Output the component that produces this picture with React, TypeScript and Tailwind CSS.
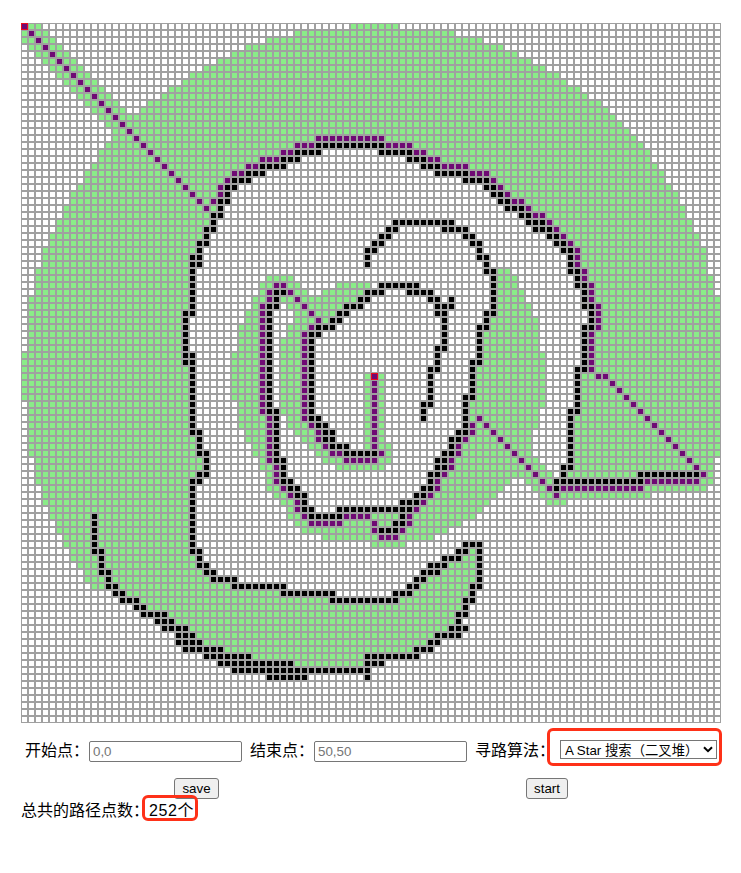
import React from "react";

type CellKind = "empty" | "visited" | "wall" | "path";

const SIZE = 100;
const START = { row: 0, col: 0 };
const END = { row: 50, col: 50 };

// Each line is "row: spans", where a span is either "col" or "from-to".
const VISITED = `
0: 1-2 47-53
1: 0-3 39-61
2: 0-4 35-65
3: 1-5 32-68
4: 2-6 30-70
5: 3-7 28-72
6: 4-8 26-74
7: 5-9 24-76
8: 6-10 23-77
9: 7-11 21-79
10: 8-12 20-80
11: 9-13 18-82
12: 10-14 17-83
13: 11-84
14: 12-85
15: 13-86
16: 13-87
17: 12-88
18: 11-42 51-89
19: 11-39 55-89
20: 10-37 57-90
21: 9-34 59-91
22: 9-32 63-91
23: 8-30 66-92
24: 7-29 67-93
25: 7-29 68-93
26: 6-28 69-94
27: 6-28 71-94
28: 5-27 72-95
29: 5-27 73-95
30: 4-26 75-96
31: 4-26 76-96
32: 3-25 77-97
33: 3-25 78-97
34: 3-25 78-97
35: 2-24 67-69 78-97
36: 2-24 35-38 67-70 79-98
37: 2-24 34-39 45-49 67-70 79-98
38: 2-24 34-40 43-48 67-71 80-98
39: 1-24 33-48 67-71 80-99
40: 1-24 33-35 38-46 67-72 80-99
41: 1-23 32-35 39-45 67-72 81-99
42: 1-23 32-35 39-44 66-73 81-99
43: 1-23 31-35 38-42 66-73 80-99
44: 1-23 31-35 38-41 65-73 80-99
45: 1-23 31-35 37-41 65-73 80-99
46: 1-23 31-35 37-41 65-73 80-99
47: 0-23 30-35 37-41 65-74 80-99
48: 0-23 30-35 37-41 65-74 80-99
49: 0-24 30-35 37-41 64-74 80-99
50: 0-24 30-35 37-41 49-51 64-74 79-99
51: 0-24 30-35 37-41 49-51 64-74 79-99
52: 0-24 30-35 37-41 49-51 64-74 79-99
53: 0-24 30-35 37-41 49-51 64-74 79-99
54: 1-24 31-35 37-41 49-51 63-74 79-99
55: 1-24 31-41 49-51 63-73 79-99
56: 1-24 31-36 38-41 49-51 63-73 78-99
57: 1-24 31-36 38-42 49-51 63-73 78-99
58: 1-24 32-36 39-43 49-51 63-72 78-99
59: 1-25 32-36 40-43 49-51 62-72 78-99
60: 1-25 33-36 41-44 49-52 61-72 78-99
61: 1-25 33-36 42-52 61-72 78-99
62: 2-26 34-36 43-52 60-73 78-98
63: 2-26 34-37 45-51 60-74 78-98
64: 2-25 35-37 59-75 78-98
65: 2-24 35-37 59-69 72-98
66: 3-24 35-38 58-68 73-97
67: 3-24 36-39 57-67 74-89
68: 3-24 37-40 56-66 75-77
69: 4-24 38-40 55-65
70: 4-24 38-64
71: 5-24 39-62
72: 5-24 40-60
73: 6-24 43-58
74: 6-24 50-54
75: 7-24 64
76: 7-25 63-64
77: 8-25 61-64
78: 9-26 60-64
79: 9-27 58-64
80: 10-30 57-64
81: 14-37 55-64
82: 16-63
83: 17-63
84: 20-62
85: 21-62
86: 23-61
87: 24-59
88: 25-58
89: 28-56
90: 32-49
91: 38-49
`;

const WALLS = `
17: 42-51
18: 39-42 51-55
19: 37-39 55-57
20: 34-37 57-59
21: 32-34 59-63
22: 30-32 63-66
23: 29-30 66-67
24: 29 67-68
25: 28-29 68-69
26: 28 69-71
27: 27-28 71-72
28: 27 53-61 72-74
29: 26-27 52-53 60-63 73-75
30: 26 51-52 63-64 75-76
31: 25-26 50-51 64-65 76-77
32: 25 49-50 65 77-78
33: 24-25 49 65-66 78
34: 24-25 49 66 78
35: 24 66-67 78-79
36: 24 67 79
37: 24 51-56 67 79-80
38: 24 36-37 49-51 55-58 67 80
39: 24 36 48-49 58-59 61 67 80
40: 24 35-36 46-48 59-61 67 80-81
41: 23-24 35 45-46 59-60 66-67 81
42: 23 35 44-45 60 66 81
43: 23 35 42-44 60 65-66 80-81
44: 23 35 41-42 60 65 80
45: 23 35 41 60 65 80
46: 23 35 41 59-60 65 80
47: 23-24 35 41 59 65 80
48: 23-24 35 41 59 64-65 80
49: 24 35 41 58-59 64 79-80
50: 24 35 41 58 64 79
51: 24 35 41 58 64 79
52: 24 35 41 58 64 79
53: 24 35 41 58 63-64 79
54: 24 35 41 57-58 63 79
55: 24 35-36 41 57 63 78-79
56: 24 36 41-42 57 63 78
57: 24 36 42-43 63 78
58: 24-25 36 43-44 62-63 78
59: 25 36 43-44 61-62 78
60: 25 36 44-46 61 78
61: 25-26 36 46-50 60-61 78
62: 26 36-37 59-60 78
63: 26 37 59-60 77-78
64: 25-26 37 58-59 77 88-96
65: 24-25 37-38 58 76-88
66: 24 38-39 57-58 76
67: 24 39-40 56-57
68: 24 40 54-56
69: 24 40-41 45-55
70: 10 24 41-45 54
71: 10 24 53-54
72: 10 24 51-53
73: 10 24
74: 10 24 63-65
75: 10-11 24-25 62-63 65
76: 11 25 60-62 65
77: 11 25-26 58-60 65
78: 11-12 26-27 57-59 65
79: 12 27-30 56-57 65
80: 12-13 30-37 55-56 64-65
81: 13-14 37-44 53-55 64
82: 14-16 44-53 63-64
83: 16-17 63
84: 17-20 62-63
85: 19-21 62
86: 20-23 61-63
87: 22-24 59-62
88: 22-25 58-59
89: 23-28 56-58
90: 26-32 49-56
91: 28-38 49-51
92: 30-49
93: 35-40 49
`;

const PATH = `
0: 0
1: 1
2: 2
3: 3
4: 4
5: 5
6: 6
7: 7
8: 8
9: 9
10: 10
11: 11
12: 12
13: 13
14: 14
15: 15
16: 16 42-51
17: 17 39-41 52-55
18: 18 37-38 56-57
19: 19 34-36 58-59
20: 20 32-33 60-63
21: 21 30-31 64-66
22: 22 29 67
23: 23 28 68
24: 24 28 69
25: 25 27 70-71
26: 26 72
27: 73-74
28: 75
29: 76
30: 77
31: 78
32: 79
33: 79
34: 79
35: 80
36: 80
37: 36-37 81
38: 35 38 81
39: 35 39 81
40: 34 40 82
41: 34 41 82
42: 34 42 82
43: 34 41 82
44: 34 40 81
45: 34 40 81
46: 34 40 81
47: 34 40 81
48: 34 40 81
49: 34 40 81
50: 34 40 50 82-83
51: 34 40 50 84
52: 34 40 50 85
53: 34 40 50 86
54: 34 40 50 87
55: 34 40 50 88
56: 35 40 50 65 89
57: 35 41 50 64 66 90
58: 35 42 50 64 67 91
59: 35 42 50 63 68 92
60: 35 43 50 62 69 93
61: 35 44-45 51 62 70 94
62: 35 46-50 61 71 95
63: 36 61 72 96
64: 36 60 73 97
65: 36 59 74 89-96
66: 37 59 75 77-88
67: 38 58 76
68: 39 57
69: 39 56
70: 40 46-49 55
71: 41-45 50 55
72: 50 54
73: 51-53
`;

function paint(board: CellKind[], source: string, kind: CellKind) {
  for (const line of source.trim().split("\n")) {
    const [row, spans] = line.split(": ");
    for (const span of spans.split(" ")) {
      const [from, to = from] = span.split("-");
      for (let col = Number(from); col <= Number(to); col++) {
        board[Number(row) * SIZE + col] = kind;
      }
    }
  }
}

function buildBoard(): CellKind[] {
  const board: CellKind[] = new Array(SIZE * SIZE).fill("empty");
  paint(board, VISITED, "visited");
  paint(board, WALLS, "wall");
  paint(board, PATH, "path");
  return board;
}

const board = buildBoard();

const FILL: Record<CellKind, string> = {
  empty: "bg-white",
  visited: "bg-[#8aec88]",
  wall: "bg-black",
  path: "bg-[#6f0a74]",
};

function Board() {
  return (
    <div className="grid h-[700px] w-[700px] grid-cols-[repeat(100,7px)] grid-rows-[repeat(100,7px)]">
      {board.map((kind, i) => {
        const row = Math.floor(i / SIZE);
        const col = i % SIZE;
        const endpoint =
          (row === START.row && col === START.col) || (row === END.row && col === END.col);
        return (
          <div
            key={i}
            className={`border ${endpoint ? "border-[#eb0a1e]" : "border-[#a0a0a0]"} ${FILL[kind]}`}
          />
        );
      })}
    </div>
  );
}

function Field({ label, placeholder }: { label: string; placeholder: string }) {
  return (
    <label className="flex items-center">
      <span className="w-16 whitespace-nowrap">{label}</span>
      <input
        placeholder={placeholder}
        className="mt-px h-[21px] w-[153px] rounded-[2px] border border-[#767676] bg-white px-[3px] text-[13.333px] leading-none placeholder:text-[#757575]"
      />
    </label>
  );
}

function PushButton({ children, className }: { children: React.ReactNode; className: string }) {
  return (
    <button
      className={`h-[21px] rounded-[3px] border border-[#767676] bg-[#efefef] text-[13.333px] leading-[19px] ${className}`}
    >
      {children}
    </button>
  );
}

export default function App() {
  return (
    <div className="h-[873px] w-[741px] bg-white pt-[23px] pl-[21px] font-['Liberation_Sans','Noto_Sans_CJK_SC',sans-serif] text-base leading-6 text-black">
      <Board />

      <div className="mt-4 flex h-6 w-[700px] items-center gap-2 pl-1">
        <Field label="开始点：" placeholder="0,0" />
        <Field label="结束点：" placeholder="50,50" />
        <div className="relative flex items-center">
          <span className="w-[85px] whitespace-nowrap">寻路算法：</span>
          <div className="relative -mt-[3px] h-[19px]">
            <select className="block h-[19px] w-[157px] appearance-none border border-[#767676] bg-white pt-px pl-1 text-[13.333px] leading-[17px]">
              <option>A Star 搜索（二叉堆）</option>
            </select>
            <svg
              className="pointer-events-none absolute top-[6px] right-1 h-[7px] w-[10px]"
              viewBox="0 0 10 7"
              fill="none"
              stroke="black"
              strokeWidth="2"
            >
              <path d="M1 1.2 5 5.2 9 1.2" />
            </svg>
          </div>
          <div className="pointer-events-none absolute -top-[11px] left-[72px] h-[38px] w-[175px] rounded-md border-3 border-[#fe3118]" />
        </div>
      </div>

      <div className="mt-[15px] flex h-[21px]">
        <PushButton className="ml-[153px] w-[45px]">save</PushButton>
        <PushButton className="ml-[307px] w-[42px]">start</PushButton>
      </div>

      <div className="relative flex h-6 items-center">
        <span className="w-32 whitespace-nowrap">总共的路径点数：</span>
        <span className="tracking-[0.6px]">252个</span>
        <div className="pointer-events-none absolute -top-1 left-[121px] h-[26px] w-14 rounded-md border-3 border-[#fe3118]" />
      </div>
    </div>
  );
}
